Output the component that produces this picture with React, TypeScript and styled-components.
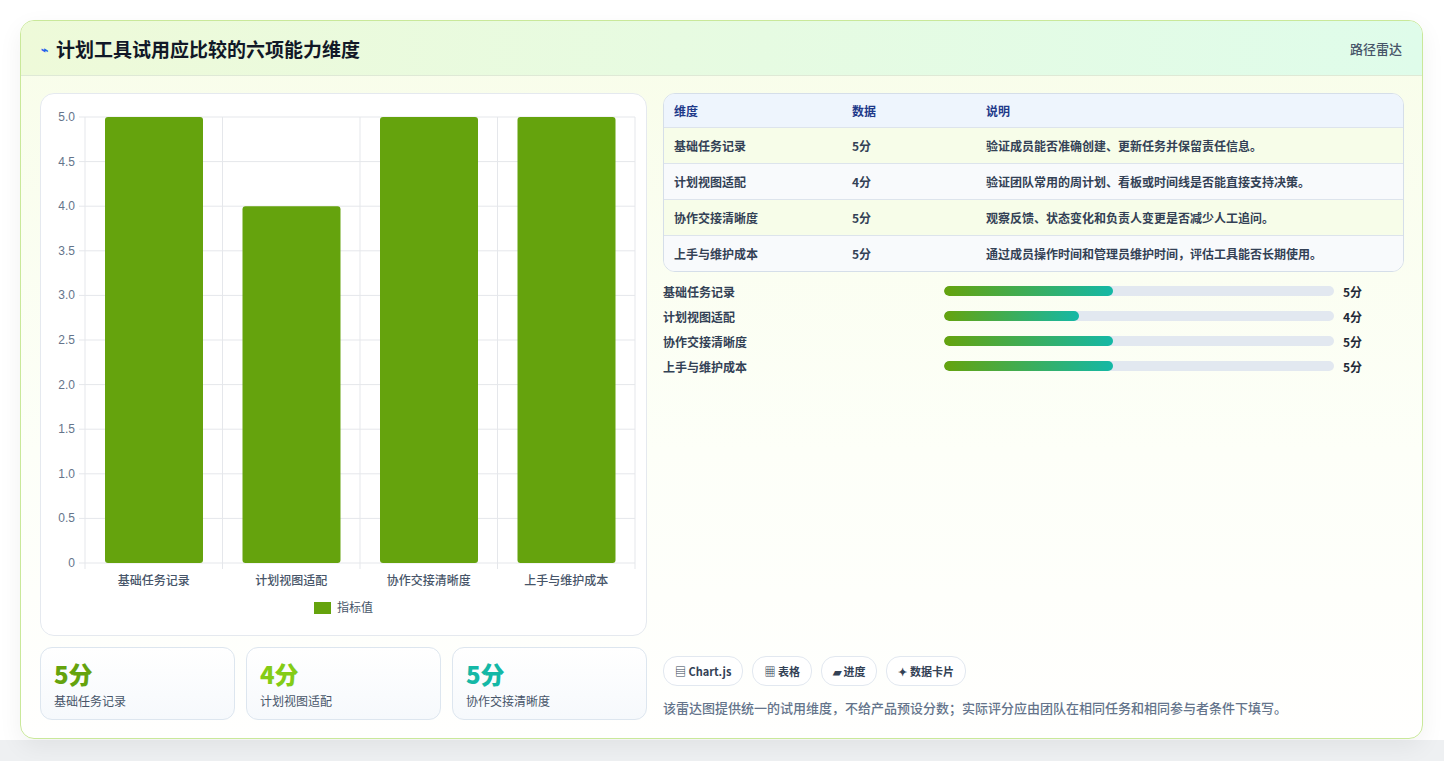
import React from "react";
import styled, { createGlobalStyle } from "styled-components";

const G = createGlobalStyle`
  html,body{margin:0;padding:0;background:#f1f3f5;}
  body{font-family:"Noto Sans CJK SC","Noto Sans",sans-serif;color:#1f2937;}
`;
const Page = styled.div`width:1444px;height:761px;padding:20px;box-sizing:border-box;background:linear-gradient(#fff,#fff 740px,#eef0f2 740px);`;
const Card = styled.div`width:1403px;height:719px;box-sizing:border-box;border:1px solid #c9e89a;border-radius:14px;overflow:hidden;
  background:linear-gradient(180deg,#f8fde9 0%,#fdfff8 60%,#fffffe 100%);box-shadow:0 8px 24px rgba(0,0,0,.06);display:flex;flex-direction:column;`;
const Header = styled.div`height:55px;box-sizing:border-box;display:flex;align-items:center;justify-content:space-between;padding:0 20px;
  background:linear-gradient(90deg,#eefad9,#dffcea);border-bottom:1px solid #dfe9d6;`;
const Title = styled.h1`margin:0;font-size:19px;font-weight:700;color:#111827;display:flex;align-items:center;gap:8px;`;
const Spark = styled.span`color:#2563eb;font-size:12px;`;
const Tag = styled.span`font-size:13px;color:#475569;font-weight:500;`;
const Body = styled.div`flex:1;display:flex;gap:16px;padding:17px 18px 18px 19px;`;
const Left = styled.div`width:607px;display:flex;flex-direction:column;gap:11px;`;
const ChartBox = styled.div`height:543px;background:#fff;border:1px solid #e5e9ef;border-radius:14px;box-sizing:border-box;`;
const Stats = styled.div`display:flex;gap:11px;`;
const Stat = styled.div`flex:1;height:73px;box-sizing:border-box;border:1px solid #dde6ef;border-radius:12px;background:linear-gradient(#fff,#f6f9fc);padding:10px 13px;`;
const StatVal = styled.div<{c:string}>`font-size:24px;font-weight:800;color:${p=>p.c};line-height:32px;`;
const StatLbl = styled.div`font-size:12px;color:#475569;margin-top:2px;`;
const Right = styled.div`flex:1;display:flex;flex-direction:column;`;
const Table = styled.div`border:1px solid #d5dee9;border-radius:12px;overflow:hidden;background:#fff;`;
const Row = styled.div<{bg:string;head?:boolean}>`display:grid;grid-template-columns:178px 134px 1fr;height:${p=>p.head?33:35}px;align-items:center;padding-left:10px;
  background:${p=>p.bg};font-size:12px;font-weight:${p=>p.head?700:600};color:${p=>p.head?"#1e3a8a":"#334155"};border-top:${p=>p.head?"none":"1px solid #dde4ec"};`;
const Bars = styled.div`display:flex;flex-direction:column;gap:7px;margin-top:10px;`;
const BarRow = styled.div`display:grid;grid-template-columns:281px 390px 1fr;align-items:center;height:18px;font-size:12px;font-weight:600;color:#334155;`;
const Track = styled.div`height:10px;border-radius:5px;background:#e2e8f0;overflow:hidden;`;
const Fill = styled.div`height:100%;border-radius:5px;background:linear-gradient(90deg,#65a30d,#14b8a6);`;
const Val = styled.span`padding-left:9px;font-weight:700;color:#1f2937;`;
const Spacer = styled.div`flex:1;`;
const Chips = styled.div`display:flex;gap:9px;`;
const Chip = styled.span`height:28px;padding:0 11px;border:1px solid #e2e8f0;border-radius:14px;background:#fff;display:flex;align-items:center;gap:4px;font-size:11px;font-weight:700;color:#334155;`;
const Note = styled.p`margin:12px 0 3px;font-size:13px;color:#64748b;font-weight:500;`;

const cats = ["基础任务记录","计划视图适配","协作交接清晰度","上手与维护成本"];
const vals = [5,4,5,5];
const descs = ["验证成员能否准确创建、更新任务并保留责任信息。","验证团队常用的周计划、看板或时间线是否能直接支持决策。","观察反馈、状态变化和负责人变更是否减少人工追问。","通过成员操作时间和管理员维护时间，评估工具能否长期使用。"];

function Chart(){
  const x0=44,x1=594,y0=23,y1=469; // relative to box
  const ticks=[0,0.5,1,1.5,2,2.5,3,3.5,4,4.5,5];
  const cw=(x1-x0)/4;
  return <svg width="605" height="541" style={{display:"block"}}>
    {ticks.map(t=>{const y=y1-(y1-y0)*t/5;return <g key={t}>
      <line x1={x0-6} x2={x1} y1={y} y2={y} stroke="#e5e7eb"/>
      <text x={x0-10} y={y+4} textAnchor="end" fontSize="12" fill="#64748b" fontFamily="Liberation Sans,sans-serif">{t===0?"0":t.toFixed(1)}</text></g>})}
    {[0,1,2,3,4].map(i=><line key={i} x1={x0+cw*i} x2={x0+cw*i} y1={y0} y2={y1+6} stroke="#e5e7eb"/>)}
    {vals.map((v,i)=>{const h=(y1-y0)*v/5;return <rect key={i} x={x0+cw*i+20} y={y1-h} width={98} height={h} rx="3" fill="#65a30d"/>})}
    {cats.map((c,i)=><text key={c} x={x0+cw*i+cw/2} y={491} textAnchor="middle" fontSize="12" fill="#475569" fontWeight="500">{c}</text>)}
    <rect x="273" y="508" width="17" height="12" fill="#65a30d"/>
    <text x="296" y="518" fontSize="12" fill="#475569">指标值</text>
  </svg>;
}

export default function App(){
  return <Page><G/><Card>
    <Header><Title><Spark>⌁</Spark>计划工具试用应比较的六项能力维度</Title><Tag>路径雷达</Tag></Header>
    <Body>
      <Left>
        <ChartBox><Chart/></ChartBox>
        <Stats>
          <Stat><StatVal c="#65a30d">5分</StatVal><StatLbl>基础任务记录</StatLbl></Stat>
          <Stat><StatVal c="#84cc16">4分</StatVal><StatLbl>计划视图适配</StatLbl></Stat>
          <Stat><StatVal c="#14b8a6">5分</StatVal><StatLbl>协作交接清晰度</StatLbl></Stat>
        </Stats>
      </Left>
      <Right>
        <Table>
          <Row head bg="#eef5fd"><span>维度</span><span>数据</span><span>说明</span></Row>
          {cats.map((c,i)=><Row key={c} bg={i%2?"#f8fafc":"#f7fde9"}><span>{c}</span><span>{vals[i]}分</span><span>{descs[i]}</span></Row>)}
        </Table>
        <Bars>
          {cats.map((c,i)=><BarRow key={c}><span>{c}</span><Track><Fill style={{width:`${vals[i]===5?43.3:34.6}%`}}/></Track><Val>{vals[i]}分</Val></BarRow>)}
        </Bars>
        <Spacer/>
        <Chips><Chip>▤ Chart.js</Chip><Chip>▦ 表格</Chip><Chip>▰ 进度</Chip><Chip>✦ 数据卡片</Chip></Chips>
        <Note>该雷达图提供统一的试用维度，不给产品预设分数；实际评分应由团队在相同任务和相同参与者条件下填写。</Note>
      </Right>
    </Body>
  </Card></Page>;
}
